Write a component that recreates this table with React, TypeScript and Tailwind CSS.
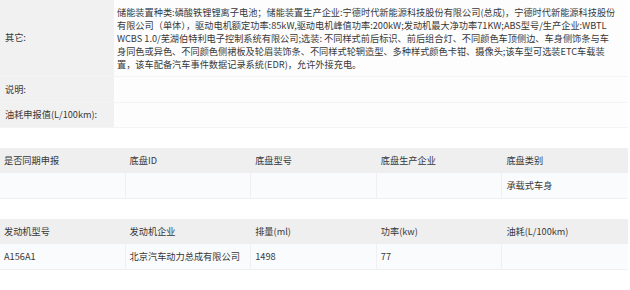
import React from 'react';

const font = { fontFamily: '"Noto Sans CJK SC", "Noto Sans", sans-serif' };

// explicit lines, wrapped the way the source page wraps them
const otherLines = [
  '储能装置种类:磷酸铁锂锂离子电池；储能装置生产企业:宁德时代新能源科技股份有限公司(总成)，宁德时代新能源科技股份',
  '有限公司（单体），驱动电机额定功率:85kW,驱动电机峰值功率:200kW;发动机最大净功率71KW;ABS型号/生产企业:WBTL',
  'WCBS 1.0/芜湖伯特利电子控制系统有限公司;选装: 不同样式前后标识、前后组合灯、不同颜色车顶侧边、车身侧饰条与车',
  '身同色或异色、不同颜色侧裙板及轮眉装饰条、不同样式轮辋造型、多种样式颜色卡钳、摄像头;该车型可选装ETC车载装',
  '置，该车配备汽车事件数据记录系统(EDR)，允许外接充电。',
];

const chassis = {
  head: ['是否同期申报', '底盘ID', '底盘型号', '底盘生产企业', '底盘类别'],
  row: ['', '', '', '', '承载式车身'],
};

const engine = {
  head: ['发动机型号', '发动机企业', '排量(ml)', '功率(kw)', '油耗(L/100km)'],
  row: ['A156A1', '北京汽车动力总成有限公司', '1498', '77', ''],
};

const InfoRow: React.FC<{ label: string; h: string; children?: React.ReactNode }> = ({ label, h, children }) => (
  <div className={`flex ${h} border-b border-[#f4f4f4]`}>
    <div className="w-[114px] shrink-0 bg-[#f1f1f1] flex items-center pl-[5px]">{label}</div>
    <div className="flex-1 bg-[#fdfdfd] pl-[3px] flex items-center">{children}</div>
  </div>
);

const Table: React.FC<{ head: string[]; row: string[] }> = ({ head, row }) => (
  <div>
    <div className="grid grid-cols-5 h-[25px] bg-[#efefef]">
      {head.map((t) => (
        <div key={t} className="flex items-center pl-[4px]">{t}</div>
      ))}
    </div>
    <div className="grid grid-cols-5 h-[26px] bg-[#fafbfc] border-b border-[#f0f0f0]">
      {row.map((t, i) => (
        <div key={i} className="flex items-center pl-[4px] border-r border-[#f0f0f2] last:border-r-0">{t}</div>
      ))}
    </div>
  </div>
);

export default function App() {
  return (
    <div className="w-[630px] h-[290px] bg-white overflow-hidden" style={font}>
      <div className="w-[628px] text-[9.2px] text-[#383838]">
        <InfoRow label="其它:" h="h-[77px]">
          <div className="leading-[13px] pt-[1px] whitespace-nowrap">
            {otherLines.map((l) => (
              <div key={l}>{l}</div>
            ))}
          </div>
        </InfoRow>
        <InfoRow label="说明:" h="h-[26px]" />
        <InfoRow label="油耗申报值(L/100km):" h="h-[25px]" />

        <div className="h-[20px]" />
        <Table head={chassis.head} row={chassis.row} />
        <div className="h-[20px]" />
        <Table head={engine.head} row={engine.row} />
      </div>
    </div>
  );
}
